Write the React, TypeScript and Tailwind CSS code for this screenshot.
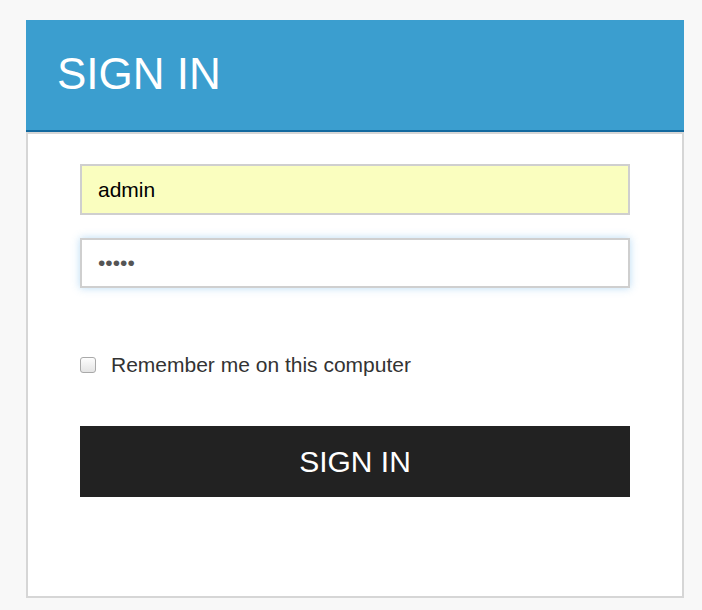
const App = () => {
  return (
    <div className="min-h-[610px] bg-[#f8f8f8] pt-[20px] font-['Liberation_Sans',Arial,sans-serif]">
      <div className="ml-[26px] w-[658px]">
        {/* header */}
        <div className="flex h-[112px] items-center border-b-2 border-[#12699f] bg-[#3b9ecf] pl-[31px] pb-[3px]">
          <h1 className="text-[44px] leading-none text-white">SIGN IN</h1>
        </div>

        {/* body */}
        <div className="border-2 border-[#d6d6d6] bg-white px-[52px] pt-[30px] pb-[99px]">
          <input
            type="text"
            readOnly
            value="admin"
            className="block h-[51px] w-full border-2 border-[#cfcfcf] bg-[#fafebf] px-[16px] text-[21px] text-black outline-none"
          />
          <input
            type="password"
            readOnly
            value="admin"
            className="mt-[23px] block h-[50px] w-full border-2 border-[#cfcfcf] bg-white px-[16px] text-[21px] text-[#555] shadow-[0_0_8px_rgba(102,175,233,0.45)] outline-none"
          />

          <label className="mt-[65px] flex h-[24px] items-center">
            <span className="h-[16px] w-[16px] rounded-[3px] border border-[#a9a9a9] bg-gradient-to-b from-[#fdfdfd] to-[#e4e4e4]" />
            <span className="ml-[15px] text-[21px] text-[#333]">Remember me on this computer</span>
          </label>

          <button className="mt-[49px] block h-[71px] w-full bg-[#222222] text-[30px] text-white">
            SIGN IN
          </button>
        </div>
      </div>
    </div>
  );
};

export default App;
